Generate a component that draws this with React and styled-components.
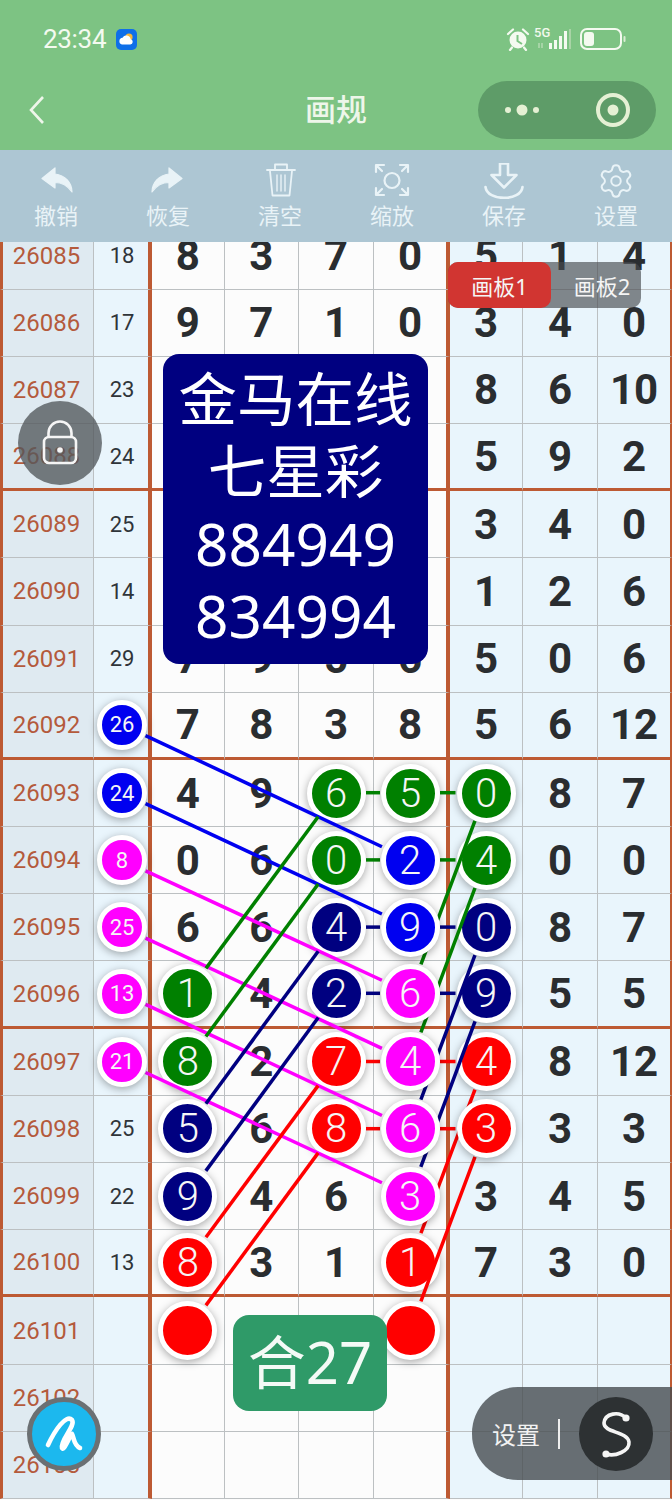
import React from "react";
import styled, { createGlobalStyle } from "styled-components";
import { Settings } from "lucide-react";

const Global = createGlobalStyle`
  html, body { margin: 0; padding: 0; background: #fff; }
  * { box-sizing: border-box; }
`;

const SANS = `"Noto Sans", "Noto Sans CJK SC", sans-serif`;
const CJK = `"Noto Sans CJK SC", "Noto Sans", sans-serif`;
const NUM = `Roboto, "Liberation Sans", sans-serif`;
const RUST = "#bd5a33";
const TOOL_INK = "#e9f3f7";

const COL_W = [94, 58, 72.5, 74.5, 75, 76, 73, 75, 74];
const ROW_H = 67.2;
const THICK = [3, 7, 11, 15];

const Page = styled.div`
  position: relative;
  width: 672px;
  height: 1500px;
  overflow: hidden;
  display: flex;
  flex-direction: column;
  background: #fcfcfc;
`;

const Header = styled.header`
  background: #7dc383;
  height: 150px;
  flex: none;
  display: flex;
  flex-direction: column;
`;
const StatusBar = styled.div`
  height: 78px;
  display: flex;
  align-items: center;
  justify-content: space-between;
  padding: 0 46px 0 43px;
`;
const StatusGroup = styled.div`
  display: flex;
  align-items: center;
  gap: ${(p) => p.$gap}px;
`;
const Clock = styled.span`
  font: 400 26px ${NUM};
  color: #f4faf0;
  letter-spacing: -0.3px;
`;
const Signal = styled.div`
  position: relative;
  width: 38px;
  height: 22px;
`;
const FiveG = styled.span`
  position: absolute;
  left: -2px;
  top: -3px;
  font: 500 13px ${NUM};
  color: #f1f8ec;
`;
const Nav = styled.div`
  flex: 1;
  display: grid;
  grid-template-columns: 1fr auto 1fr;
  align-items: center;
  padding: 2px 16px 10px 16px;
`;
const BackButton = styled.div`
  padding-left: 12px;
  display: flex;
  align-items: center;
`;
const Title = styled.h1`
  margin: 0 0 5px;
  font: 500 31px ${CJK};
  color: #eef6ea;
`;
const Capsule = styled.div`
  justify-self: end;
  width: 178px;
  height: 58px;
  border-radius: 29px;
  background: #5e9c68;
  display: flex;
  align-items: center;
  justify-content: space-between;
  padding: 0 25px 0 27px;
`;

const Toolbar = styled.nav`
  flex: none;
  height: 92px;
  background: #adc6d3;
  display: grid;
  grid-template-columns: repeat(6, 1fr);
  padding-top: 13px;
`;
const Tool = styled.div`
  display: flex;
  flex-direction: column;
  align-items: center;
`;
const ToolIcon = styled.div`
  width: 44px;
  height: 36px;
  display: flex;
  align-items: center;
  justify-content: center;
  color: ${TOOL_INK};
`;
const ToolLabel = styled.span`
  font: 400 22px/30px ${CJK};
  color: ${TOOL_INK};
`;

const Board = styled.main`
  flex: 1;
  overflow: hidden;
  min-height: 0;
`;
const Sheet = styled.div`
  position: relative;
  margin-top: -19.6px;
  display: grid;
  grid-template-columns: ${COL_W.map((w) => w + "px").join(" ")};
  grid-auto-rows: ${ROW_H}px;
`;
const Cell = styled.div`
  display: flex;
  align-items: center;
  justify-content: center;
  min-width: 0;
  background: ${(p) => p.$bg};
  padding-left: ${(p) => p.$padLeft || 0}px;
  padding-right: ${(p) => p.$padRight || 0}px;
  border-bottom: ${(p) => (p.$thick ? `3px solid ${RUST}` : "1px solid #bcc0c2")};
  border-right: ${(p) => p.$right};
  border-left: ${(p) => p.$left || "none"};
`;
const IdText = styled.span`
  font: 400 24px ${NUM};
  color: #b45a3c;
`;
const SumText = styled.span`
  font: 400 22px ${NUM};
  color: #2f3439;
`;
const Digit = styled.span`
  font: 700 42px ${NUM};
  color: #2a2d30;
`;
const Ball = styled.div`
  position: relative;
  z-index: ${(p) => (p.$raised ? 4 : 2)};
  flex: none;
  width: ${(p) => (p.$small ? 50 : 59)}px;
  height: ${(p) => (p.$small ? 50 : 59)}px;
  border-radius: 50%;
  border: 5px solid #fff;
  background: ${(p) => p.$color};
  box-shadow: 0 2px 8px rgba(0, 0, 0, 0.34);
  display: flex;
  align-items: center;
  justify-content: center;
  color: #f6f6f6;
  font: ${(p) => (p.$small ? "400 22px" : "300 40px")} ${NUM};
`;
const Lines = styled.svg`
  position: absolute;
  left: 0;
  top: 0;
  width: 672px;
  height: ${19 * ROW_H}px;
  z-index: 3;
  pointer-events: none;
`;

const AdCard = styled.aside`
  position: absolute;
  z-index: 5;
  left: 163px;
  top: 354px;
  width: 265px;
  height: 310px;
  padding-bottom: 5px;
  border-radius: 16px;
  background: #000080;
  color: #fff;
  display: flex;
  flex-direction: column;
  align-items: center;
  justify-content: center;
  font: 400 58.5px/72.4px ${SANS};
`;
const Tabs = styled.div`
  position: absolute;
  z-index: 6;
  left: 448px;
  top: 262px;
  width: 193px;
  height: 46px;
  border-radius: 10px;
  background: rgba(70, 74, 78, 0.65);
  display: flex;
`;
const TabItem = styled.div`
  flex: ${(p) => (p.$active ? "0 0 103px" : "1")};
  padding-left: ${(p) => (p.$active ? 0 : 12)}px;
  border-radius: 10px;
  background: ${(p) => (p.$active ? "#d13531" : "transparent")};
  display: flex;
  align-items: center;
  justify-content: center;
  color: #f5f5f5;
  font: 400 22px ${SANS};
`;
const LockButton = styled.div`
  position: absolute;
  z-index: 6;
  left: 18px;
  top: 401px;
  width: 84px;
  height: 84px;
  border-radius: 50%;
  background: rgba(82, 87, 91, 0.78);
  display: flex;
  align-items: center;
  justify-content: center;
`;
const SumBadge = styled.div`
  position: absolute;
  z-index: 6;
  left: 233px;
  top: 1315px;
  width: 154px;
  height: 96px;
  padding-bottom: 8px;
  border-radius: 16px;
  background: #2f9a68;
  color: #f4faf6;
  display: flex;
  align-items: center;
  justify-content: center;
  font: 400 58px ${SANS};
`;
const PenButton = styled.div`
  position: absolute;
  z-index: 6;
  left: 27px;
  top: 1397px;
  width: 74px;
  height: 74px;
  border-radius: 50%;
  border: 5px solid #6b7073;
  background: #1cb8ee;
  display: flex;
  align-items: center;
  justify-content: center;
`;
const SidePill = styled.div`
  position: absolute;
  z-index: 6;
  left: 472px;
  right: 0;
  top: 1387px;
  height: 93px;
  border-radius: 46px 0 0 46px;
  background: rgba(70, 76, 80, 0.8);
  display: flex;
  align-items: center;
  padding-left: 20px;
`;
const PillLabel = styled.span`
  font: 400 24px ${CJK};
  color: #f2f2f2;
`;
const PillRule = styled.span`
  width: 2px;
  height: 30px;
  background: #eee;
  margin: 0 19px 0 18px;
`;
const PillKnob = styled.div`
  width: 74px;
  height: 74px;
  border-radius: 50%;
  background: #2d3133;
  display: flex;
  align-items: center;
  justify-content: center;
`;

const COLORS = { g: "#008000", n: "#000080", b: "#0000f0", m: "#ff00ff", r: "#ff0000", R: "#ff0000" };

const ROWS = [
  ["26085", "18", 8, 3, 7, 0, 5, 1, 4],
  ["26086", "17", 9, 7, 1, 0, 3, 4, 0],
  ["26087", "23", "", "", "", "", 8, 6, 10],
  ["26088", "24", "", "", "", "", 5, 9, 2],
  ["26089", "25", "", "", "", "", 3, 4, 0],
  ["26090", "14", "", "", "", "", 1, 2, 6],
  ["26091", "29", 7, 9, 5, 6, 5, 0, 6],
  ["26092", "b26", 7, 8, 3, 8, 5, 6, 12],
  ["26093", "b24", 4, 9, "g6", "g5", "g0", 8, 7],
  ["26094", "m8", 0, 6, "g0", "b2", "g4", 0, 0],
  ["26095", "m25", 6, 6, "n4", "b9", "n0", 8, 7],
  ["26096", "m13", "g1", 4, "n2", "m6", "n9", 5, 5],
  ["26097", "m21", "g8", 2, "r7", "m4", "r4", 8, 12],
  ["26098", "25", "n5", 6, "r8", "m6", "R3", 3, 3],
  ["26099", "22", "n9", 4, 6, "m3", 3, 4, 5],
  ["26100", "13", "r8", 3, 1, "r1", 7, 3, 0],
  ["26101", "", "r", "", "", "r", "", "", ""],
  ["26102", "", "", "", "", "", "", "", ""],
  ["26103", "", "", "", "", "", "", "", ""],
];

const colCenter = [46.5, 122, 187.5, 261.3, 336, 410, 485.5, 560, 634];
const rowCenter = (r) => ROW_H * (r + 0.5) - (THICK.includes(r) ? 1.5 : 0.5);

const SLANTS = [
  [1, 7, 5, 9, "b", 26],
  [1, 8, 5, 10, "b", 26],
  [1, 9, 5, 11, "m", 26],
  [1, 10, 5, 12, "m", 26],
  [1, 11, 5, 13, "m", 26],
  [1, 12, 5, 14, "m", 26],
  [4, 8, 2, 11, "g", 30],
  [4, 9, 2, 12, "g", 30],
  [4, 10, 2, 13, "n", 30],
  [4, 11, 2, 14, "n", 30],
  [4, 12, 2, 15, "r", 30],
  [4, 13, 2, 16, "r", 30],
  [6, 8, 5, 11, "g", 30],
  [6, 9, 5, 12, "g", 30],
  [6, 10, 5, 13, "n", 30],
  [6, 11, 5, 14, "n", 30],
  [6, 12, 5, 15, "r", 30],
  [6, 13, 5, 16, "r", 30],
];
const LINKS = [
  [8, "g"],
  [9, "g"],
  [10, "n"],
  [11, "n"],
  [12, "r"],
  [13, "r"],
];

function segment(c1, r1, c2, r2, startR, endR) {
  const x1 = colCenter[c1];
  const y1 = rowCenter(r1);
  const x2 = colCenter[c2];
  const y2 = rowCenter(r2);
  const len = Math.hypot(x2 - x1, y2 - y1);
  const ux = (x2 - x1) / len;
  const uy = (y2 - y1) / len;
  return { x1: x1 + ux * startR, y1: y1 + uy * startR, x2: x2 - ux * endR, y2: y2 - uy * endR };
}

function cellBg(c) {
  if (c === 0) return "#dfeaf1";
  if (c === 1 || c >= 6) return "#e9f5fc";
  return "#fcfcfc";
}
function cellRight(c) {
  if (c === 1 || c === 5) return `4px solid ${RUST}`;
  if (c === 8) return `2px solid ${RUST}`;
  return "1px solid #bcc0c2";
}

function CellContent({ col, value }) {
  if (col === 0) return <IdText>{value}</IdText>;
  if (value === "") return null;
  const s = String(value);
  if (/^[gnbmrR]/.test(s)) {
    const kind = s[0];
    return (
      <Ball
        $color={COLORS[kind]}
        $small={col === 1}
        $raised={kind === "m" || kind === "b" || kind === "R"}
      >
        {s.slice(1)}
      </Ball>
    );
  }
  if (col === 1) return <SumText>{s}</SumText>;
  return <Digit>{s}</Digit>;
}

const UndoGlyph = ({ flip }) => (
  <svg width="44" height="36" viewBox="0 0 44 36" style={flip ? { transform: "scaleX(-1)" } : undefined}>
    <path
      d="M8 15.5 L21 5 V11 C31 12 38 20 38 29 C33 22 28 19.5 21 19.5 V25 Z"
      fill="currentColor"
      stroke="currentColor"
      strokeWidth="1.2"
      strokeLinejoin="round"
    />
  </svg>
);
const TrashGlyph = () => (
  <svg width="44" height="36" viewBox="0 0 44 36" fill="none" stroke="currentColor" strokeWidth="1.8" strokeLinecap="round" strokeLinejoin="round">
    <path d="M9 7 H37 M17 7 V1.5 H29 V7 M12 8 L14.5 32.5 H31.5 L34 8" />
    <path d="M19 12 V28 M23 12 V28 M27 12 V28" strokeWidth="1.4" />
  </svg>
);
const FocusGlyph = () => (
  <svg width="44" height="36" viewBox="0 0 44 36" fill="none" stroke="currentColor" strokeWidth="2.2" strokeLinecap="round" strokeLinejoin="round">
    <circle cx="22" cy="17.5" r="7.5" />
    <path d="M6 9 V2 H14 M7 3 L12 8 M38 9 V2 H30 M37 3 L32 8 M6 25 V32 H14 M7 31 L12 26 M38 25 V32 H30 M37 31 L32 26" />
  </svg>
);
const SaveGlyph = () => (
  <svg width="44" height="36" viewBox="0 0 44 36" fill="none" stroke="currentColor" strokeWidth="2.6" strokeLinecap="round" strokeLinejoin="round">
    <path d="M18 0.5 H26 V12 H34.5 L22 24.5 L9.5 12 H18 Z" />
    <path d="M3.5 24 C5 38.5 39 38.5 40.5 24" />
  </svg>
);

const TOOLS = [
  ["撤销", <UndoGlyph />],
  ["恢复", <UndoGlyph flip />],
  ["清空", <TrashGlyph />],
  ["缩放", <FocusGlyph />],
  ["保存", <SaveGlyph />],
  ["设置", <Settings size={38} strokeWidth={1.25} />],
];

export default function App() {
  return (
    <Page>
      <Global />
      <Header>
        <StatusBar>
          <StatusGroup $gap={10}>
            <Clock>23:34</Clock>
            <svg width="21" height="21" viewBox="0 0 21 21">
              <rect width="21" height="21" rx="5" fill="#0f6fe8" />
              <circle cx="13" cy="8" r="3.6" fill="#f7b63a" />
              <path d="M6 15.5 a3.4 3.4 0 0 1 .5-6.7 a4.4 4.4 0 0 1 8.2 1.4 a2.7 2.7 0 0 1 -.4 5.3 Z" fill="#fff" />
            </svg>
          </StatusGroup>
          <StatusGroup $gap={6}>
            <svg width="24" height="24" viewBox="0 0 24 24" fill="#f4faf0">
              <circle cx="12" cy="13" r="8.5" />
              <path d="M2 7 L7 2.5 M22 7 L17 2.5 M6 20.5 L4 23 M18 20.5 L20 23" stroke="#f4faf0" strokeWidth="2.2" fill="none" strokeLinecap="round" />
              <path d="M11.5 8 V14 L16 17" stroke="#7dc383" strokeWidth="2" fill="none" />
            </svg>
            <Signal>
              <FiveG>5G</FiveG>
              <svg width="38" height="22" viewBox="0 0 38 22">
                <path d="M3 15 V20 M6 15 V20" stroke="#cfe6c8" strokeWidth="1" />
                <path d="M13 15 H16 V21 H13 Z M18 12 H21 V21 H18 Z M23 8 H26 V21 H23 Z M28 3 H31 V21 H28 Z" fill="#f4faf0" />
                <path d="M34 1 V21" stroke="#a9d4a6" strokeWidth="2" />
              </svg>
            </Signal>
            <svg width="46" height="22" viewBox="0 0 46 22">
              <rect x="1" y="1" width="40" height="20" rx="6" fill="none" stroke="#f4faf0" strokeWidth="2" />
              <rect x="4" y="4" width="10" height="14" rx="3" fill="#f4faf0" />
              <rect x="43.5" y="8" width="2" height="6" rx="1" fill="#d9ecd3" />
            </svg>
          </StatusGroup>
        </StatusBar>
        <Nav>
          <BackButton>
            <svg width="18" height="30" viewBox="0 0 18 30" fill="none" stroke="#eef6ea" strokeWidth="2.6">
              <path d="M15 2 L3 15 L15 28" />
            </svg>
          </BackButton>
          <Title>画规</Title>
          <Capsule>
            <svg width="34" height="12" viewBox="0 0 34 12" fill="#e5f0d4">
              <circle cx="3" cy="6" r="3" />
              <circle cx="17" cy="6" r="5.5" />
              <circle cx="31" cy="6" r="3" />
            </svg>
            <svg width="36" height="36" viewBox="0 0 36 36">
              <circle cx="18" cy="18" r="15" fill="none" stroke="#e5f0d4" strokeWidth="4" />
              <circle cx="18" cy="18" r="5.5" fill="#e5f0d4" />
            </svg>
          </Capsule>
        </Nav>
      </Header>

      <Toolbar>
        {TOOLS.map(([label, icon]) => (
          <Tool key={label}>
            <ToolIcon>{icon}</ToolIcon>
            <ToolLabel>{label}</ToolLabel>
          </Tool>
        ))}
      </Toolbar>

      <Board>
        <Sheet>
          {ROWS.map((row, r) =>
            row.map((value, c) => (
              <Cell
                key={`${r}-${c}`}
                $bg={cellBg(c)}
                $thick={THICK.includes(r)}
                $right={cellRight(c)}
                $left={c === 0 ? `3px solid ${RUST}` : undefined}
                $padLeft={c === 1 ? 2 : 0}
                $padRight={c === 0 ? 3 : 0}
              >
                <CellContent col={c} value={value} />
              </Cell>
            ))
          )}
          <Lines viewBox={`0 0 672 ${19 * ROW_H}`}>
            {LINKS.map(([r, k]) =>
              [4, 5].map((c) => {
                const s = segment(c, r, c + 1, r, 30, 30);
                return <line key={`${r}-${c}`} {...s} stroke={COLORS[k]} strokeWidth="3.5" />;
              })
            )}
            {SLANTS.map(([c1, r1, c2, r2, k, start]) => (
              <line
                key={`${c1}-${r1}`}
                {...segment(c1, r1, c2, r2, start, 31)}
                stroke={COLORS[k]}
                strokeWidth="3.5"
              />
            ))}
          </Lines>
        </Sheet>
      </Board>

      <AdCard>
        <div>金马在线</div>
        <div>七星彩</div>
        <div>884949</div>
        <div>834994</div>
      </AdCard>

      <Tabs>
        <TabItem $active>画板1</TabItem>
        <TabItem>画板2</TabItem>
      </Tabs>

      <LockButton>
        <svg width="36" height="46" viewBox="0 0 36 46" fill="none" stroke="#f5f5f5" strokeWidth="2.6">
          <path d="M6.5 17 V13 a11.5 11.5 0 0 1 23 0 V17" />
          <rect x="2" y="17" width="32" height="26" rx="5" />
          <circle cx="18" cy="30" r="2.8" fill="#f5f5f5" stroke="none" />
        </svg>
      </LockButton>

      <SumBadge>合27</SumBadge>

      <PenButton>
        <svg width="64" height="64" viewBox="5 5 64 64" fill="none" stroke="#fff" strokeWidth="4.6" strokeLinecap="round" strokeLinejoin="round">
          <path d="M21 48 C28 33 39 17 45 23 C49 29 33 43 35 51 C37 55 43 38 45 37 C47 41 47 49 53 51" />
        </svg>
      </PenButton>

      <SidePill>
        <PillLabel>设置</PillLabel>
        <PillRule />
        <PillKnob>
          <svg width="74" height="74" viewBox="0 0 74 74" fill="none" stroke="#f5f5f5" strokeWidth="3.6" strokeLinecap="round">
            <path d="M47 21 C40 14 26 16 25 26 C25 36 48 34 50 45 C51 54 36 60 27 57" />
            <circle cx="47" cy="21" r="3.6" fill="#f5f5f5" stroke="none" />
            <circle cx="27" cy="57" r="3.6" fill="#f5f5f5" stroke="none" />
          </svg>
        </PillKnob>
      </SidePill>
    </Page>
  );
}
